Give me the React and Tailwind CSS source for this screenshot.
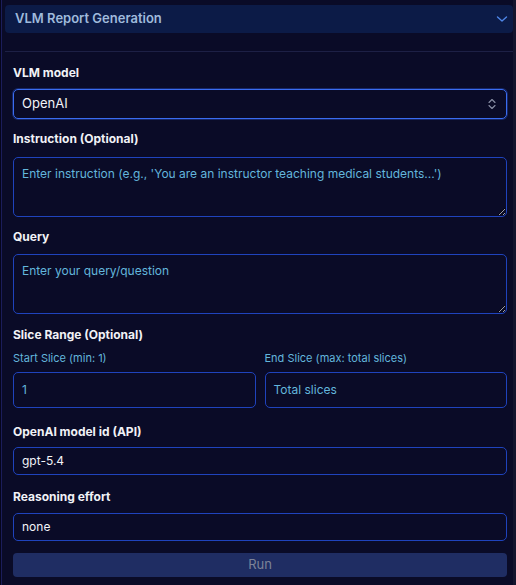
import React from "react";

function Label({ children, className = "" }) {
  return (
    <div className={`text-[12px] leading-4 font-bold text-[#f1f2f6] ${className}`}>{children}</div>
  );
}

export default function App() {
  return (
    <div
      className="w-[516px] h-[585px] overflow-hidden bg-[#0a0b27] flex"
      style={{ fontFamily: "Inter, 'Noto Sans', sans-serif" }}
    >
      <div className="w-[1px] bg-[#05051a]" />
      <div className="w-[1px] bg-[#1b1d5a]" />
      <div className="flex-1 flex flex-col">
        <div className="mt-[5px] ml-[3px] h-[28px] rounded-[4px] bg-[#0c1b47] flex items-center justify-between pl-[10px] pr-[5px]">
          <span className="text-[13px] font-semibold text-[#9fbadc]">VLM Report Generation</span>
          <svg width="12" height="8" viewBox="0 0 12 8" fill="none">
            <path d="M1.5 2 L6 6 L10.5 2" stroke="#4f86e8" strokeWidth="1.4" strokeLinecap="round" strokeLinejoin="round" />
          </svg>
        </div>
        <div className="mt-[18px] ml-[3px] h-[1px] bg-[#1d2045]" />
        <div className="pl-[11px] pr-[6px] flex flex-col">
          <Label className="mt-[13px]">VLM model</Label>
          <div className="mt-[8px] h-[30px] rounded-[5px] border border-[#3a6cf0] shadow-[0_0_0_1px_rgba(45,90,220,0.35)] flex items-center justify-between pl-[8px] pr-[10px]">
            <span className="text-[13px] text-[#f3f4f8]">OpenAI</span>
            <svg width="8" height="12" viewBox="0 0 8 12" fill="none">
              <path d="M1 4.5 L4 1.5 L7 4.5 M1 7.5 L4 10.5 L7 7.5" stroke="#8a8fa5" strokeWidth="1.1" strokeLinecap="round" strokeLinejoin="round" />
            </svg>
          </div>
          <Label className="mt-[12px]">Instruction (Optional)</Label>
          <textarea
            className="mt-[10px] h-[60px] rounded-[5px] border border-[#1f43bd] bg-transparent px-[8px] pt-[8px] text-[12px] leading-4 text-[#63b6dc] placeholder:text-[#63b6dc] outline-none"
            placeholder="Enter instruction (e.g., 'You are an instructor teaching medical students...')"
          />
          <Label className="mt-[12px]">Query</Label>
          <textarea
            className="mt-[9px] h-[60px] rounded-[5px] border border-[#1f43bd] bg-transparent px-[8px] pt-[8px] text-[12px] leading-4 text-[#63b6dc] placeholder:text-[#63b6dc] outline-none"
            placeholder="Enter your query/question"
          />
          <Label className="mt-[13px]">Slice Range (Optional)</Label>
          <div className="mt-[8px] grid grid-cols-2 gap-[9px]">
            <div className="flex flex-col">
              <div className="text-[11px] leading-[14px] text-[#63b6dc]">Start Slice (min: 1)</div>
              <div className="mt-[7px] h-[36px] rounded-[5px] border border-[#1f43bd] flex items-center pl-[8px] text-[12px] text-[#63b6dc]">1</div>
            </div>
            <div className="flex flex-col">
              <div className="text-[11px] leading-[14px] text-[#63b6dc]">End Slice (max: total slices)</div>
              <div className="mt-[7px] h-[36px] rounded-[5px] border border-[#1f43bd] flex items-center pl-[8px] text-[12px] text-[#63b6dc]">Total slices</div>
            </div>
          </div>
          <Label className="mt-[16px]">OpenAI model id (API)</Label>
          <div className="mt-[7px] h-[28px] rounded-[5px] border border-[#1f43bd] flex items-center pl-[8px] text-[12px] text-[#f3f4f8]">gpt-5.4</div>
          <Label className="mt-[14px]">Reasoning effort</Label>
          <div className="mt-[8px] h-[28px] rounded-[5px] border border-[#1f43bd] flex items-center pl-[8px] text-[12px] text-[#f3f4f8]">none</div>
          <div className="mt-[12px] h-[24px] rounded-[4px] bg-[#1f2d63] flex items-center justify-center text-[13px] text-[#7d8398]">Run</div>
        </div>
      </div>
      <div className="w-[3px] bg-[#14152e]" />
    </div>
  );
}
